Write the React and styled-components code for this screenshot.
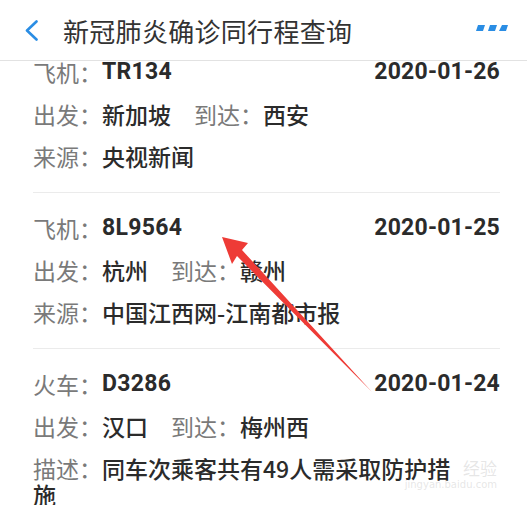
import React from "react";
import styled, { createGlobalStyle } from "styled-components";

const Global = createGlobalStyle`
  html, body { margin: 0; padding: 0; background: #fff; }
  body { font-family: Roboto, "Noto Sans CJK SC", sans-serif; }
`;

const Page = styled.div`
  width: 527px;
  height: 505px;
  position: relative;
  overflow: hidden;
  background: #fff;
`;

const Header = styled.header`
  height: 60px;
  border-bottom: 1px solid #e2e2e2;
  display: flex;
  align-items: center;
  padding: 0 19px 0 24px;
  box-sizing: content-box;
  position: relative;
  z-index: 2;
  background: #fff;
`;

const BackBtn = styled.svg`
  width: 15px;
  height: 21px;
  flex: none;
  margin-top: 1px;
`;

const Title = styled.h1`
  margin: 0 0 0 24px;
  flex: 1;
  font-family: "Noto Sans CJK SC", sans-serif;
  font-weight: 400;
  font-size: 26px;
  color: #333;
  letter-spacing: 0.3px;
`;

const Dots = styled.svg`
  width: 32px;
  height: 6px;
  flex: none;
  margin-top: -5px;
`;

const Viewport = styled.div`
  height: 444px;
  overflow: hidden;
  padding: 0 27px 0 33px;
`;

const List = styled.div`
  margin-top: -24px;
`;

const Card = styled.section`
  padding: 22px 0 23px;
  border-bottom: 1px solid #ebebeb;
  display: flex;
  flex-direction: column;
  gap: 16px;
`;

const Row = styled.div`
  font-family: "Noto Sans CJK SC", sans-serif;
  font-size: 23px;
  line-height: 26px;
  color: #2b2b2b;
  max-width: ${(p) => (p.$narrow ? "440px" : "none")};
  & > span { line-height: 26px; vertical-align: top; }
`;

const TopRow = styled(Row)`
  height: 26px;
  display: flex;
  justify-content: space-between;
  align-items: center;
  overflow: visible;
`;

const Lead = styled.span`
  display: flex;
  align-items: center;
  height: 26px;
`;

const Label = styled.span`
  color: #7a7a7a;
  font-weight: 400;
  margin-left: ${(p) => (p.$gap ? "23px" : "0")};
`;

const Value = styled.span`
  color: #2b2b2b;
  font-weight: 500;
`;

const Code = styled.span`
  font-family: Roboto, sans-serif;
  font-weight: 700;
  font-size: 23px;
  line-height: 26px;
  color: #2b2b2b;
  letter-spacing: 0.3px;
`;

const DateText = styled.span`
  font-family: Roboto, sans-serif;
  font-weight: 700;
  font-size: 23px;
  line-height: 26px;
  color: #2b2b2b;
  letter-spacing: 0.2px;
`;

const Arrow = styled.svg`
  position: absolute;
  left: 0;
  top: 0;
  width: 527px;
  height: 505px;
  pointer-events: none;
  z-index: 3;
`;

const Watermark = styled.div`
  position: absolute;
  right: 30px;
  bottom: 14px;
  z-index: 3;
  display: flex;
  flex-direction: column;
  align-items: flex-end;
  font-family: "Noto Sans CJK SC", sans-serif;
  color: rgba(200, 200, 200, 0.45);
  pointer-events: none;
`;

const WmBig = styled.span`
  font-size: 17px;
  line-height: 20px;
`;

const WmSmall = styled.span`
  font-family: "DejaVu Sans", sans-serif;
  font-size: 10px;
  line-height: 13px;
`;

const trips = [
  { kind: "飞机", code: "TR134", date: "2020-01-26", from: "新加坡", to: "西安", infoLabel: "来源", info: "央视新闻" },
  { kind: "飞机", code: "8L9564", date: "2020-01-25", from: "杭州", to: "赣州", infoLabel: "来源", info: "中国江西网-江南都市报" },
  { kind: "火车", code: "D3286", date: "2020-01-24", from: "汉口", to: "梅州西", infoLabel: "描述", info: "同车次乘客共有49人需采取防护措施" },
];

export default function App() {
  return (
    <Page>
      <Global />
      <Header>
        <BackBtn viewBox="0 0 15 21">
          <path d="M12.5 1.5 L3 10.5 L12.5 19.5" fill="none" stroke="#2a8de4" strokeWidth="2.6" strokeLinecap="round" strokeLinejoin="round" />
        </BackBtn>
        <Title>新冠肺炎确诊同行程查询</Title>
        <Dots viewBox="0 0 32 6">
          <polygon points="2,0 9,0 7,6 0,6" fill="#2a8de4" />
          <polygon points="14,0 21,0 19,6 12,6" fill="#2a8de4" />
          <polygon points="26,0 32,0 30,6 23,6" fill="#2a8de4" />
        </Dots>
      </Header>
      <Viewport>
        <List>
          {trips.map((t) => (
            <Card key={t.code}>
              <TopRow>
                <Lead>
                  <Label>{t.kind}：</Label>
                  <Code>{t.code}</Code>
                </Lead>
                <DateText>{t.date}</DateText>
              </TopRow>
              <Row>
                <Label>出发：</Label>
                <Value>{t.from}</Value>
                <Label $gap>到达：</Label>
                <Value>{t.to}</Value>
              </Row>
              <Row $narrow>
                <Label>{t.infoLabel}：</Label>
                <Value>{t.info}</Value>
              </Row>
            </Card>
          ))}
        </List>
      </Viewport>
      <Watermark>
        <WmBig>经验</WmBig>
        <WmSmall>jingyan.baidu.com</WmSmall>
      </Watermark>
      <Arrow viewBox="0 0 527 505">
        <polygon
          points="222,237 248,243 242,250 372,392 237,256 232,264"
          fill="#ee3b36"
        />
      </Arrow>
    </Page>
  );
}
